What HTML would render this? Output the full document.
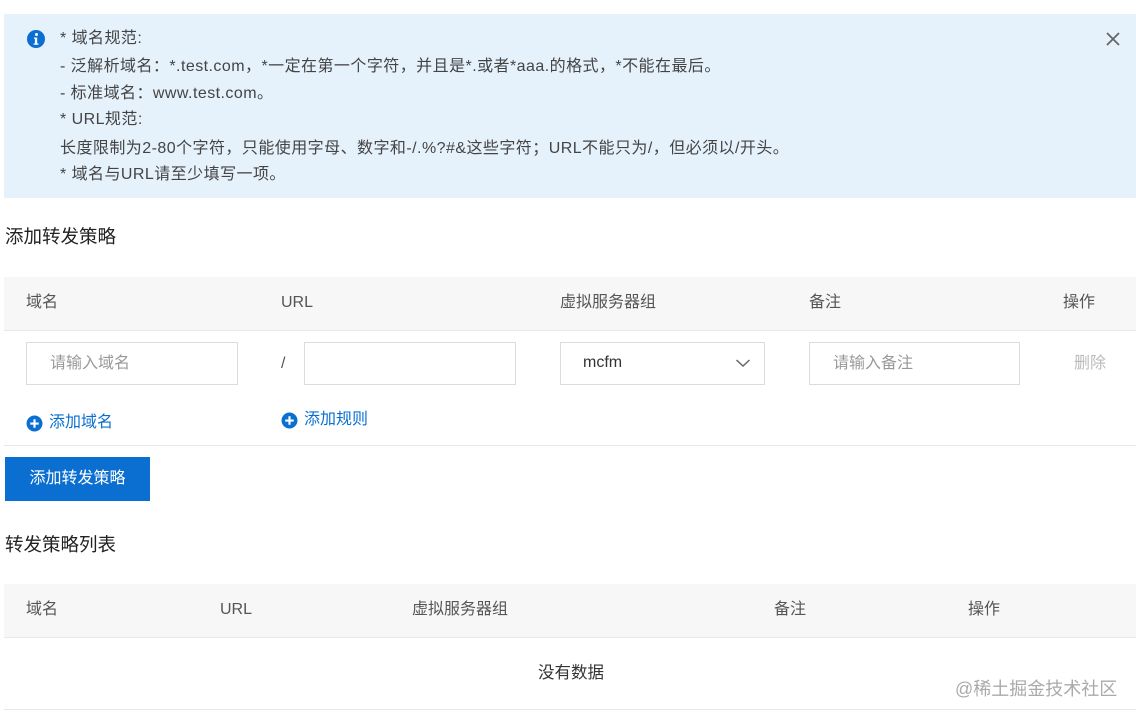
<!DOCTYPE html>
<html><head><meta charset="utf-8"><style>
*{margin:0;padding:0;box-sizing:border-box}
body{width:1136px;height:720px;background:#fff;font-family:"Liberation Sans","Noto Sans CJK SC",sans-serif;color:#333;position:relative;overflow:hidden;font-size:16px}
.a{position:absolute;line-height:20px}
.info{left:4px;top:14px;width:1132px;height:184px;background:#e5f1fb}
.info p{position:absolute;left:56px;font-size:16px;color:#444;line-height:20px;letter-spacing:0.45px;white-space:nowrap}
.hd{background:#f7f7f7;border-bottom:1px solid #e8e8e8}
.in{border:1px solid #dcdcdc;height:43px;background:#fff}
.ph{color:#999}
</style></head><body>
<div class="a info">
<svg class="a" style="left:22px;top:15px" width="20" height="20" viewBox="0 0 20 20"><circle cx="10" cy="10" r="9" fill="#0a6fd0"/><circle cx="10.5" cy="5.5" r="1.5" fill="#fff"/><path d="M8 8.5h3.2v6h1.3v1.3H7.6v-1.3h1.3v-4.7H8z" fill="#fff"/></svg>
<p style="top:15px">* 域名规范:</p>
<p style="top:43px">- 泛解析域名：*.test.com，*一定在第一个字符，并且是*.或者*aaa.的格式，*不能在最后。</p>
<p style="top:70px">- 标准域名：www.test.com。</p>
<p style="top:96px">* URL规范:</p>
<p style="top:125px">长度限制为2-80个字符，只能使用字母、数字和-/.%?#&amp;这些字符；URL不能只为/，但必须以/开头。</p>
<p style="top:151px">* 域名与URL请至少填写一项。</p>
<svg class="a" style="left:1101px;top:17px" width="16" height="16" viewBox="0 0 16 16"><path d="M2 2L14 14M14 2L2 14" stroke="#666" stroke-width="1.8"/></svg>
</div>
<div class="a" style="left:5px;top:227px;font-size:18.5px;color:#222">添加转发策略</div>
<div class="a hd" style="left:4px;top:277px;width:1132px;height:54px"></div>
<div class="a" style="left:26px;top:293px;color:#555">域名</div>
<div class="a" style="left:281px;top:293px;color:#555">URL</div>
<div class="a" style="left:560px;top:293px;color:#555">虚拟服务器组</div>
<div class="a" style="left:809px;top:293px;color:#555">备注</div>
<div class="a" style="left:1063px;top:293px;color:#555">操作</div>
<div class="a in" style="left:26px;top:342px;width:212px"></div>
<div class="a ph" style="left:50px;top:354px">请输入域名</div>
<div class="a" style="left:281px;top:354px;color:#555">/</div>
<div class="a in" style="left:304px;top:342px;width:212px"></div>
<div class="a in" style="left:560px;top:342px;width:205px"></div>
<div class="a" style="left:583px;top:353px;color:#333;font-size:16px">mcfm</div>
<svg class="a" style="left:735px;top:357px" width="16" height="12" viewBox="0 0 16 12"><path d="M1.5 3L8 9L14.5 3" stroke="#666" stroke-width="1.5" fill="none"/></svg>
<div class="a in" style="left:809px;top:342px;width:211px"></div>
<div class="a ph" style="left:833px;top:354px">请输入备注</div>
<div class="a" style="left:1074px;top:354px;color:#bbb">删除</div>
<svg class="a" style="left:26px;top:415px" width="17" height="17" viewBox="0 0 16 16"><circle cx="8" cy="8" r="7.5" fill="#0a6fd0"/><path d="M4 8h8M8 4v8" stroke="#fff" stroke-width="2"/></svg>
<div class="a" style="left:49px;top:413px;color:#0a6fd0;font-size:16px">添加域名</div>
<svg class="a" style="left:281px;top:412px" width="17" height="17" viewBox="0 0 16 16"><circle cx="8" cy="8" r="7.5" fill="#0a6fd0"/><path d="M4 8h8M8 4v8" stroke="#fff" stroke-width="2"/></svg>
<div class="a" style="left:304px;top:410px;color:#0a6fd0;font-size:16px">添加规则</div>
<div class="a" style="left:4px;top:445px;width:1132px;height:1px;background:#e8e8e8"></div>
<div class="a" style="left:5px;top:457px;width:145px;height:44px;background:#0a6fd0;color:#fff;text-align:center;line-height:44px;font-size:16px">添加转发策略</div>
<div class="a" style="left:5px;top:535px;font-size:18.5px;color:#222">转发策略列表</div>
<div class="a hd" style="left:4px;top:584px;width:1132px;height:54px"></div>
<div class="a" style="left:26px;top:600px;color:#555">域名</div>
<div class="a" style="left:220px;top:600px;color:#555">URL</div>
<div class="a" style="left:412px;top:600px;color:#555">虚拟服务器组</div>
<div class="a" style="left:774px;top:600px;color:#555">备注</div>
<div class="a" style="left:968px;top:600px;color:#555">操作</div>
<div class="a" style="left:538px;top:663px;color:#333;font-size:16.5px">没有数据</div>
<div class="a" style="left:955px;top:679px;color:#aaa;font-size:18px">@稀土掘金技术社区</div>
<div class="a" style="left:4px;top:709px;width:1132px;height:1px;background:#e8e8e8"></div>
</body></html>
